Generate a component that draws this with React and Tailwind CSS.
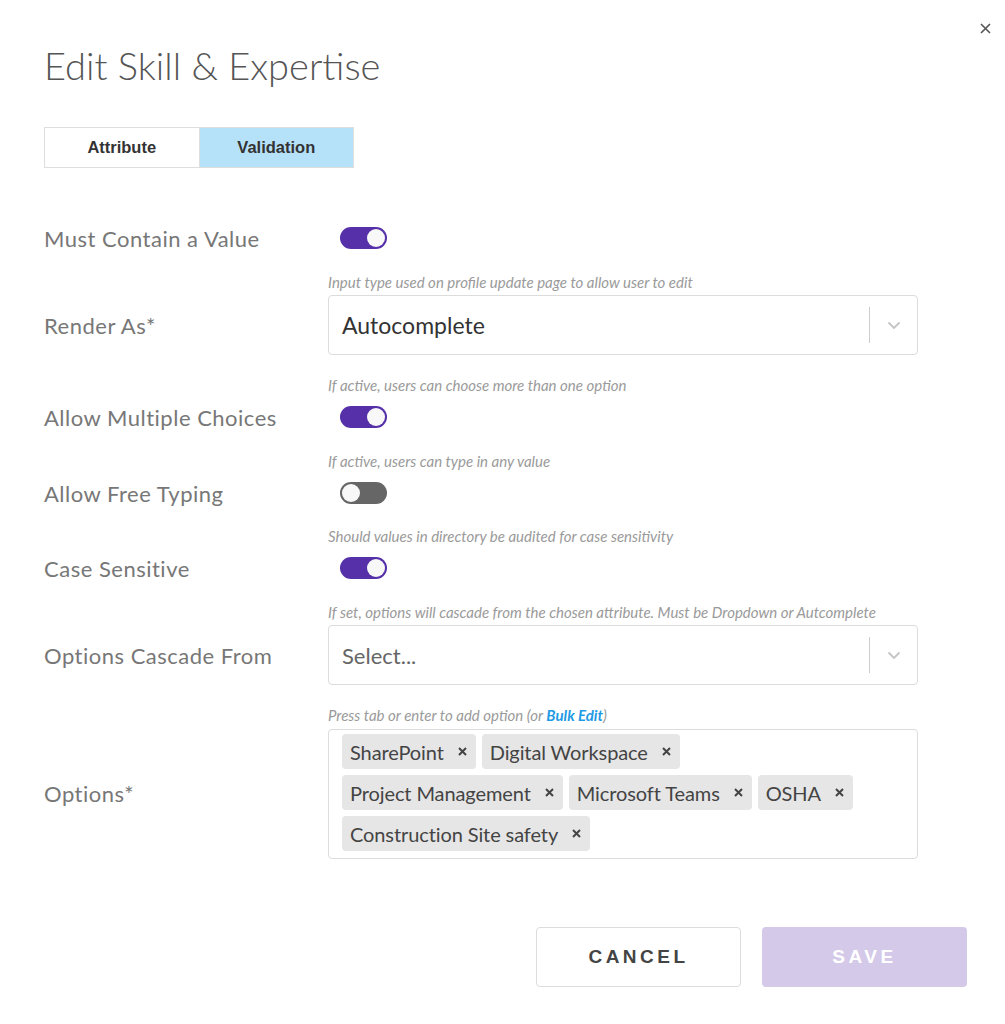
import React from "react";

const lato = { fontFamily: "Lato, 'Open Sans', sans-serif" };

function Toggle({ on }) {
  return (
    <div className="flex h-[38px] items-center px-3">
      <div
        className={
          on
            ? "flex h-[22px] w-[47px] items-center justify-end rounded-full bg-[#5530a9] p-[2px]"
            : "flex h-[22px] w-[47px] items-center justify-start rounded-full bg-[#666666] p-[2px]"
        }
      >
        <div className="h-[18px] w-[18px] rounded-full bg-[#f8f8f8]" />
      </div>
    </div>
  );
}

function Select({ value, placeholder }) {
  return (
    <div className="flex h-[60px] items-center rounded border border-[#dcdcdc] bg-white">
      <div
        className={
          value
            ? "flex-1 pl-[13px] text-[23px] text-[#333]"
            : "flex-1 pl-[13px] text-[22px] text-[#666]"
        }
      >
        {value || placeholder}
      </div>
      <div className="h-[36px] w-px bg-[#cccccc]" />
      <div className="flex w-[47px] items-center justify-center">
        <svg width="14" height="9" viewBox="0 0 14 9" fill="none">
          <path d="M1.5 1.5 7 7l5.5-5.5" stroke="#c4c4c4" strokeWidth="1.8" />
        </svg>
      </div>
    </div>
  );
}

function Field({ label, helper, children, className }) {
  return (
    <div className={"grid grid-cols-[284px_590px] " + (className || "")}>
      {helper && (
        <p className="col-start-2 mb-[4px] text-[15px] italic leading-[18px] text-[#9a9a9a]">
          {helper}
        </p>
      )}
      <div className="col-start-1 flex items-center text-[22px] tracking-[0.5px] text-[#777]">
        {label}
      </div>
      <div>{children}</div>
    </div>
  );
}

function Tag({ text }) {
  return (
    <span className="flex h-[35px] items-center gap-[14px] rounded-sm bg-[#e6e6e6] pl-[8px] pr-[9px] text-[20px] tracking-[-0.1px] text-[#444]">
      {text}
      <svg width="9" height="9" viewBox="0 0 9 9">
        <path d="M1 1l7 7M8 1 1 8" stroke="#444" strokeWidth="2" />
      </svg>
    </span>
  );
}

export default function App() {
  const options = [
    "SharePoint",
    "Digital Workspace",
    "Project Management",
    "Microsoft Teams",
    "OSHA",
    "Construction Site safety",
  ];

  return (
    <div className="relative min-h-[1024px] w-[1005px] bg-white" style={lato}>
      {/* close */}
      <button className="absolute right-[13px] top-[22px] p-[1px]" aria-label="Close">
        <svg width="11" height="11" viewBox="0 0 11 11">
          <path d="M1 1l9 9M10 1 1 10" stroke="#555" strokeWidth="1.6" />
        </svg>
      </button>

      <div className="px-[44px] pt-[42px]">
        <h1 className="text-[38px] font-light leading-[46px] text-[#555]">
          Edit Skill &amp; Expertise
        </h1>

        {/* tabs */}
        <div
          className="mt-[39px] flex h-[41px] w-[310px] border border-[#dedede] text-[16.5px] font-bold text-[#333]"
          style={{ fontFamily: "'Liberation Sans', Arial, sans-serif" }}
        >
          <div className="flex flex-1 items-center justify-center bg-white">Attribute</div>
          <div className="flex flex-1 items-center justify-center border-l border-[#dedede] bg-[#b5e1f9]">
            Validation
          </div>
        </div>

        <div className="mt-[51px] flex flex-col">
          <Field label="Must Contain a Value">
            <Toggle on />
          </Field>

          <Field
            className="mt-[16px]"
            label="Render As*"
            helper="Input type used on profile update page to allow user to edit"
          >
            <Select value="Autocomplete" />
          </Field>

          <Field
            className="mt-[21px]"
            label="Allow Multiple Choices"
            helper="If active, users can choose more than one option"
          >
            <Toggle on />
          </Field>

          <Field
            className="mt-[16px]"
            label="Allow Free Typing"
            helper="If active, users can type in any value"
          >
            <Toggle on={false} />
          </Field>

          <Field
            className="mt-[15px]"
            label="Case Sensitive"
            helper="Should values in directory be audited for case sensitivity"
          >
            <Toggle on />
          </Field>

          <Field
            className="mt-[16px]"
            label="Options Cascade From"
            helper="If set, options will cascade from the chosen attribute. Must be Dropdown or Autcomplete"
          >
            <Select placeholder="Select..." />
          </Field>

          <Field
            className="mt-[21px]"
            label="Options*"
            helper={
              <>
                Press tab or enter to add option (or{" "}
                <span className="font-bold text-[#1e9be4]">Bulk Edit</span>)
              </>
            }
          >
            <div className="mt-[1px] flex min-h-[130px] flex-wrap content-start gap-x-[6px] gap-y-[6px] rounded border border-[#dcdcdc] px-[13px] py-[4px]">
              {options.map((o) => (
                <Tag key={o} text={o} />
              ))}
            </div>
          </Field>
        </div>

        {/* footer */}
        <div
          className="mt-[68px] flex justify-end gap-[21px]"
          style={{ fontFamily: "'Liberation Sans', Arial, sans-serif" }}
        >
          <button className="h-[60px] w-[205px] rounded border border-[#dcdcdc] bg-white text-[19px] font-bold tracking-[3.5px] text-[#444]">
            CANCEL
          </button>
          <button className="-mr-[6px] h-[60px] w-[205px] rounded bg-[#d4c9e8] text-[19px] font-bold tracking-[3.5px] text-white">
            SAVE
          </button>
        </div>
      </div>
    </div>
  );
}
